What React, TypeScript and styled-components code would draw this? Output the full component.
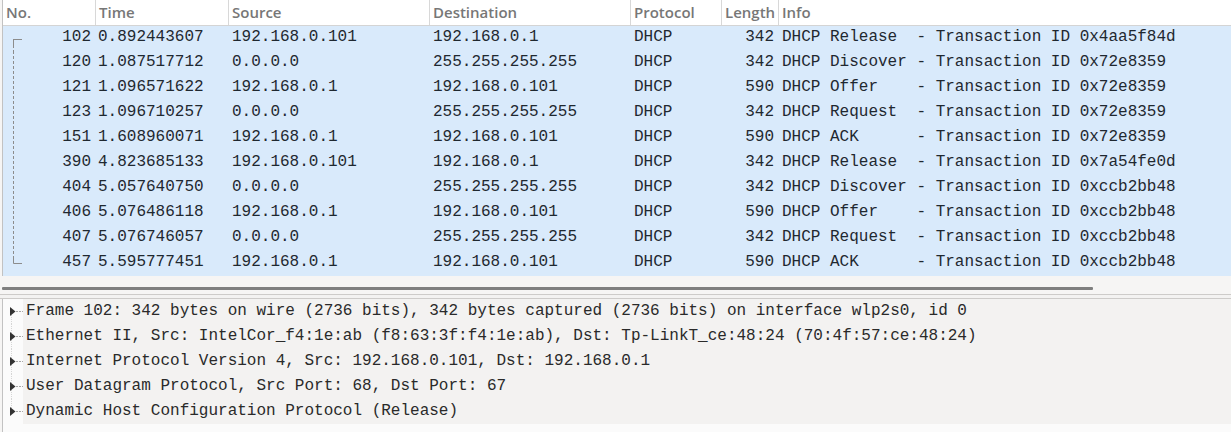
import React from 'react'
import styled, { createGlobalStyle } from 'styled-components'

const GlobalStyle = createGlobalStyle`
  html, body {
    margin: 0;
    padding: 0;
    background: #f6f5f4;
  }
  * { box-sizing: border-box; }
`

const MONO = `"Liberation Mono", "DejaVu Sans Mono", monospace`
const COLS = '92px 133px 201px 201px 91px 57px 1fr'

const Window = styled.div`
  width: 1231px;
  height: 432px;
  display: flex;
  flex-direction: column;
  overflow: hidden;
  background: #f6f5f4;
`

const PacketList = styled.div`
  margin-left: 2px;
  border-left: 1px solid #c2c2c2;
  background: #ffffff;
  display: flex;
  flex-direction: column;
`

const HeaderRow = styled.div`
  display: grid;
  grid-template-columns: ${COLS};
  height: 26px;
  border-bottom: 1px solid #d4d4d4;
  background: #ffffff;
`

const HeaderCell = styled.div<{ $first?: boolean }>`
  border-left: ${p => (p.$first ? 'none' : '1px solid #d8d8d8')};
  padding-left: 3px;
  font-family: "Open Sans", "Noto Sans", sans-serif;
  font-weight: 600;
  font-size: 15px;
  line-height: 24px;
  color: #777777;
  white-space: nowrap;
  overflow: hidden;
`

const PacketRow = styled.div`
  display: grid;
  grid-template-columns: ${COLS};
  height: 25px;
  background: #d9eafb;
  font-family: ${MONO};
  font-size: 16px;
  line-height: 19px;
  padding-top: 2px;
  color: #1f2830;
`

const Cell = styled.div<{ $right?: boolean }>`
  padding: 0 ${p => (p.$right ? '4px' : '0')} 0 ${p => (p.$right ? '0' : '4px')};
  text-align: ${p => (p.$right ? 'right' : 'left')};
  white-space: pre;
  overflow: hidden;
`

const NoCell = styled.div`
  display: flex;
  align-items: flex-start;
  justify-content: space-between;
  padding-right: 4px;
  padding-left: 10px;
  margin-top: -2px;
`

const NoText = styled.span`
  padding-top: 2px;
`

const ListFooter = styled.div`
  height: 18px;
  background: #f6f5f4;
  display: flex;
  align-items: center;
  padding-left: 2px;
  padding-top: 6px;
`

const ScrollThumb = styled.div`
  width: 1091px;
  height: 3px;
  border-radius: 1px;
  background: #7f7f7f;
`

const Splitter = styled.div`
  height: 5px;
  border-top: 1px solid #cdcbc9;
  border-bottom: 1px solid #cdcbc9;
  background: #f3f2f1;
`

const DetailPane = styled.div`
  flex: 1;
  margin-left: 2px;
  border-left: 1px solid #c2c2c2;
  background: #fbfbfb;
  display: flex;
  flex-direction: column;
`

const DetailRow = styled.div`
  display: flex;
  height: 25px;
`

const Expander = styled.div`
  width: 20px;
  flex: none;
`

const DetailLabel = styled.div`
  flex: 1;
  background: #f3f2f1;
  padding-left: 3px;
  font-family: ${MONO};
  font-size: 16px;
  line-height: 25px;
  color: #2a2a2a;
  white-space: pre;
  overflow: hidden;
`

type TreeKind = 'first' | 'middle' | 'last'

const RelatedMark = ({ kind }: { kind: TreeKind }) => (
  <svg width="10" height="25" viewBox="0 0 10 25" style={{ flex: 'none' }}>
    {kind === 'first' && (
      <>
        <path d="M0.5 13.5 H9" stroke="#8c8c8c" strokeWidth="1" fill="none" />
        <path d="M0.5 13 V19" stroke="#8c8c8c" strokeWidth="1" fill="none" />
        <path d="M0.5 19 V25" stroke="#8c8c8c" strokeWidth="1" strokeDasharray="3 2" fill="none" />
      </>
    )}
    {kind === 'middle' && (
      <path d="M0.5 0 V25" stroke="#8c8c8c" strokeWidth="1" strokeDasharray="3 2" fill="none" />
    )}
    {kind === 'last' && (
      <>
        <path d="M0.5 0 V6" stroke="#8c8c8c" strokeWidth="1" strokeDasharray="3 2" fill="none" />
        <path d="M0.5 6 V12.5 H9" stroke="#8c8c8c" strokeWidth="1" fill="none" />
      </>
    )}
  </svg>
)

const TreeArrow = ({ first, last }: { first?: boolean; last?: boolean }) => (
  <svg width="20" height="25" viewBox="0 0 20 25">
    <path
      d={`M8.5 ${first ? 12 : 0} V${last ? 13 : 25}`}
      stroke="#d6d6d6"
      strokeWidth="1"
      strokeDasharray="1 1"
      fill="none"
    />
    <path d="M13 12.5 H20" stroke="#a8a8a8" strokeWidth="1" strokeDasharray="2 1" fill="none" />
    <path d="M7 8 L12.5 12.5 L7 17 Z" fill="#333333" />
  </svg>
)

type Packet = {
  no: number
  time: string
  src: string
  dst: string
  len: number
  type: string
  xid: string
}

const packets: Packet[] = [
  { no: 102, time: '0.892443607', src: '192.168.0.101', dst: '192.168.0.1', len: 342, type: 'Release', xid: '0x4aa5f84d' },
  { no: 120, time: '1.087517712', src: '0.0.0.0', dst: '255.255.255.255', len: 342, type: 'Discover', xid: '0x72e8359' },
  { no: 121, time: '1.096571622', src: '192.168.0.1', dst: '192.168.0.101', len: 590, type: 'Offer', xid: '0x72e8359' },
  { no: 123, time: '1.096710257', src: '0.0.0.0', dst: '255.255.255.255', len: 342, type: 'Request', xid: '0x72e8359' },
  { no: 151, time: '1.608960071', src: '192.168.0.1', dst: '192.168.0.101', len: 590, type: 'ACK', xid: '0x72e8359' },
  { no: 390, time: '4.823685133', src: '192.168.0.101', dst: '192.168.0.1', len: 342, type: 'Release', xid: '0x7a54fe0d' },
  { no: 404, time: '5.057640750', src: '0.0.0.0', dst: '255.255.255.255', len: 342, type: 'Discover', xid: '0xccb2bb48' },
  { no: 406, time: '5.076486118', src: '192.168.0.1', dst: '192.168.0.101', len: 590, type: 'Offer', xid: '0xccb2bb48' },
  { no: 407, time: '5.076746057', src: '0.0.0.0', dst: '255.255.255.255', len: 342, type: 'Request', xid: '0xccb2bb48' },
  { no: 457, time: '5.595777451', src: '192.168.0.1', dst: '192.168.0.101', len: 590, type: 'ACK', xid: '0xccb2bb48' },
]

const details = [
  'Frame 102: 342 bytes on wire (2736 bits), 342 bytes captured (2736 bits) on interface wlp2s0, id 0',
  'Ethernet II, Src: IntelCor_f4:1e:ab (f8:63:3f:f4:1e:ab), Dst: Tp-LinkT_ce:48:24 (70:4f:57:ce:48:24)',
  'Internet Protocol Version 4, Src: 192.168.0.101, Dst: 192.168.0.1',
  'User Datagram Protocol, Src Port: 68, Dst Port: 67',
  'Dynamic Host Configuration Protocol (Release)',
]

const headers = ['No.', 'Time', 'Source', 'Destination', 'Protocol', 'Length', 'Info']

const App = () => {
  return (
    <Window>
      <GlobalStyle />
      <PacketList>
        <HeaderRow>
          {headers.map((h, i) => (
            <HeaderCell key={h} $first={i === 0}>{h}</HeaderCell>
          ))}
        </HeaderRow>
        {packets.map((p, i) => (
          <PacketRow key={p.no}>
            <NoCell>
              <RelatedMark kind={i === 0 ? 'first' : i === packets.length - 1 ? 'last' : 'middle'} />
              <NoText>{p.no}</NoText>
            </NoCell>
            <Cell style={{ paddingLeft: 3 }}>{p.time}</Cell>
            <Cell>{p.src}</Cell>
            <Cell>{p.dst}</Cell>
            <Cell>DHCP</Cell>
            <Cell $right>{p.len}</Cell>
            <Cell>{`DHCP ${p.type.padEnd(8)} - Transaction ID ${p.xid}`}</Cell>
          </PacketRow>
        ))}
      </PacketList>
      <ListFooter>
        <ScrollThumb />
      </ListFooter>
      <Splitter />
      <DetailPane>
        {details.map((d, i) => (
          <DetailRow key={i}>
            <Expander>
              <TreeArrow first={i === 0} last={i === details.length - 1} />
            </Expander>
            <DetailLabel>{d}</DetailLabel>
          </DetailRow>
        ))}
      </DetailPane>
    </Window>
  )
}

export default App
